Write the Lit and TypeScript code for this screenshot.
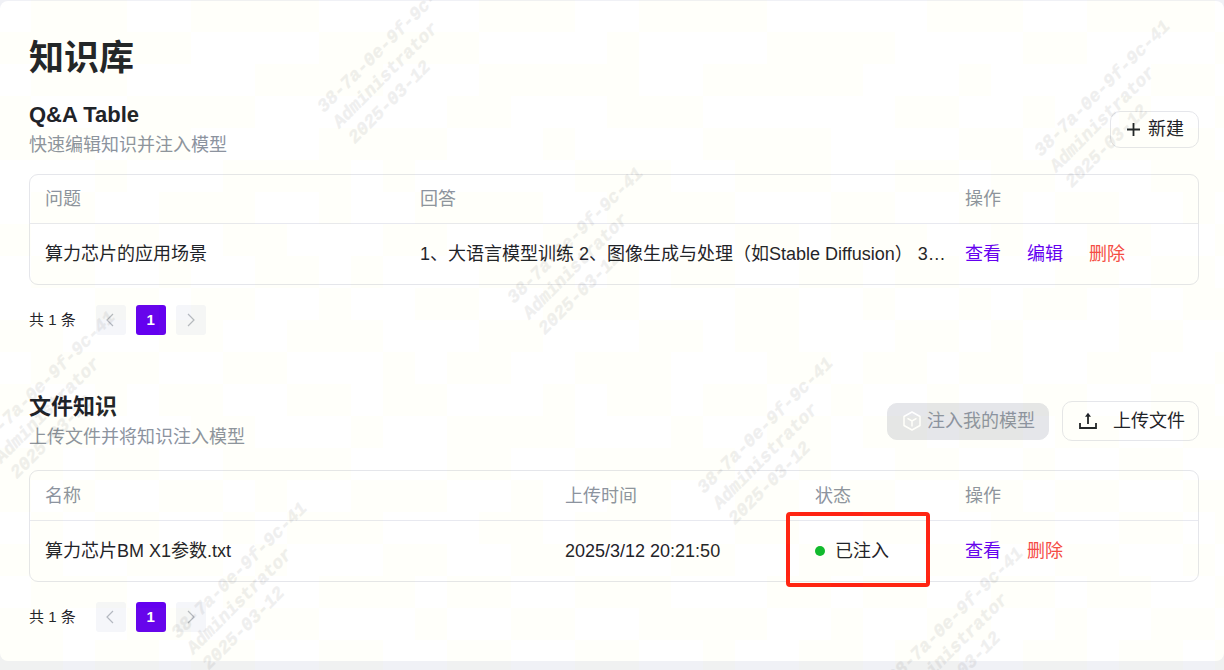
import { LitElement, html, css, svg } from "lit";
import { customElement, property } from "lit/decorators.js";

const CELL = 32;

/* Tint mosaic of the watermark layer: one string per row, "1" is a tinted cell. */
const MOSAIC = [
  "011100111100000111001111000001110011110",
  "111111000011111000010000111100001100001",
  "011100001111000111110011111000100000110",
  "100011110000001100011100000011001001001",
  "111011000011110001000011110000110111110",
  "000100011110100000111001110011011000111",
  "011001110010011110011110001100110110010",
  "100110011000110001100001101110010011001",
  "011001001101000111010110011011000110110",
  "000110110010011001110001100100101101011",
  "110001100111000110001101100011010001100",
  "011110011000101100111000110110110011001",
  "100101100110110001011011001001001100110",
  "011000110001001111000100110110110110011",
  "110110011110001100111110010011001001100",
  "101001101001110010011001101100110110011",
  "010110010111000110111001100110011001101",
  "110011101000110011000110011001100110010",
  "011100010011101100111000110110011011001",
  "110011001100010011001111001001100100110",
  "110110110011001100110010011011001101101",
];

const MARKS = [
  [324, 113],
  [1041, 157],
  [514, 304],
  [-14, 448],
  [704, 494],
  [178, 639],
  [894, 684],
];

@customElement("kb-watermark")
export class KbWatermark extends LitElement {
  static styles = css`
    :host {
      position: absolute;
      inset: 0;
      overflow: hidden;
      pointer-events: none;
    }
    .layer {
      display: block;
      width: 100%;
      height: 100%;
    }
    .tint {
      fill: #ffff00;
      fill-opacity: 0.02;
    }
    .mark {
      font: italic 700 18px "Liberation Mono", monospace;
      fill: #000;
      stroke: #000;
      stroke-width: 0.5px;
      opacity: 0.06;
    }
  `;

  render() {
    const tint = MOSAIC.map((row, y) =>
      [...row]
        .map((c, x) => (c === "1" ? `M${x * CELL - 1} ${y * CELL}h${CELL}v${CELL}h-${CELL}z` : ""))
        .join("")
    ).join("");
    return html`<svg class="layer" aria-hidden="true">
      <path class="tint" d=${tint}></path>
      ${MARKS.map(
        ([x, y]) => svg`<g class="mark" transform="translate(${x} ${y}) rotate(-45)">
          <text x="0" y="0">38-7a-0e-9f-9c-41</text>
          <text x="0" y="22">Administrator</text>
          <text x="0" y="44">2025-03-12</text>
        </g>`
      )}
    </svg>`;
  }
}

@customElement("kb-pager")
export class KbPager extends LitElement {
  @property({ type: Number }) total = 1;

  static styles = css`
    :host {
      display: flex;
      align-items: center;
      gap: 10px;
      margin-top: 20px;
      font-size: 15px;
    }
    .total {
      margin-right: 10px;
    }
    .btn {
      display: flex;
      align-items: center;
      justify-content: center;
      width: 30px;
      height: 30px;
      padding: 0;
      border: 0;
      border-radius: 3px;
      background: #f5f6fa;
      color: #b4b8c0;
      font: inherit;
    }
    .current {
      background: #6400f0;
      color: #fff;
      font-weight: 700;
    }
  `;

  render() {
    return html`
      <span class="total">共 ${this.total} 条</span>
      <button class="btn" disabled aria-label="上一页">
        <svg width="14" height="14" viewBox="0 0 14 14" fill="none" stroke="currentColor" stroke-width="1.2"><path d="M9 1 3 7l6 6" /></svg>
      </button>
      <button class="btn current" aria-current="page">1</button>
      <button class="btn" disabled aria-label="下一页">
        <svg width="14" height="14" viewBox="0 0 14 14" fill="none" stroke="currentColor" stroke-width="1.2"><path d="m4 1 6 6-6 6" /></svg>
      </button>
    `;
  }
}

@customElement("app-root")
export class AppRoot extends LitElement {
  static styles = css`
    :host {
      position: relative;
      display: flex;
      flex-direction: column;
      box-sizing: border-box;
      min-height: 100vh;
      padding: 1px 0 9px;
      background: #f0f1f6;
      color: #1f2329;
      font-family: "Liberation Sans", "Noto Sans CJK SC", sans-serif;
      font-size: 18px;
      line-height: 28px;
    }
    .card {
      flex: 1;
      box-sizing: border-box;
      padding: 33px 25px 29px 29px;
      border-radius: 8px;
      background: #fff;
    }
    .title {
      margin: 0 0 17px;
      font-size: 35px;
      line-height: 48px;
    }
    .files {
      margin-top: 56px;
    }
    .head {
      display: flex;
      align-items: center;
      justify-content: space-between;
      margin-bottom: 15px;
    }
    .files .head {
      margin-bottom: 19px;
    }
    .subtitle {
      margin: 0;
      font-size: 22px;
      line-height: 32px;
    }
    .hint {
      margin: 0;
      color: #8c939f;
    }
    .tools {
      display: flex;
      align-items: center;
      gap: 13px;
    }
    .button {
      display: flex;
      align-items: center;
      gap: 8px;
      height: 37px;
      box-sizing: border-box;
      padding: 0 14px 0 16px;
      border: 1px solid #e5e6eb;
      border-radius: 10px;
      background: #fff;
      color: #1f2329;
      font: inherit;
    }
    .inject {
      padding: 0 13px 0 15px;
      gap: 6px;
      border-color: #e5e6ea;
      background: #e5e6ea;
      color: #8c939f;
    }
    .inject svg {
      color: #fff;
    }
    .upload {
      gap: 16px;
      height: 40px;
      padding: 0 13px 0 16px;
    }
    .frame {
      border: 1px solid #e5e6eb;
      border-radius: 9px;
    }
    .table {
      width: 100%;
      table-layout: fixed;
      border-collapse: separate;
      border-spacing: 0;
    }
    th,
    td {
      box-sizing: border-box;
      padding: 0 0 0 15px;
      text-align: left;
      font-weight: 400;
      white-space: nowrap;
      overflow: hidden;
      text-overflow: ellipsis;
    }
    th {
      height: 49px;
      border-bottom: 1px solid #e8e9f0;
      color: #8c939f;
    }
    .files th {
      height: 50px;
    }
    td {
      height: 60px;
    }
    .c-question {
      width: 375px;
    }
    .c-time {
      width: 250px;
    }
    .c-status {
      width: 150px;
    }
    .c-ops {
      width: 248px;
    }
    .ops {
      display: flex;
      gap: 26px;
    }
    .link {
      color: #6400f0;
      text-decoration: none;
    }
    .danger {
      color: #f54a45;
    }
    .status-cell {
      position: relative;
      overflow: visible;
    }
    .status {
      display: flex;
      align-items: center;
      gap: 10px;
    }
    .dot {
      width: 10px;
      height: 10px;
      border-radius: 50%;
      background: #0db92e;
    }
    .callout {
      position: absolute;
      inset: -9px 20px -6px -14px;
      border: 4px solid #ff2213;
      border-radius: 4px;
      pointer-events: none;
    }
  `;

  render() {
    return html`
      <main class="card">
        <h1 class="title">知识库</h1>

        <section>
          <div class="head">
            <div>
              <h2 class="subtitle">Q&amp;A Table</h2>
              <p class="hint">快速编辑知识并注入模型</p>
            </div>
            <button class="button">
              <svg width="13" height="13" viewBox="0 0 13 13" fill="none" stroke="currentColor" stroke-width="1.8">
                <path d="M6.5 0v13M0 6.5h13" />
              </svg>
              新建
            </button>
          </div>
          <div class="frame">
            <table class="table">
              <thead>
                <tr>
                  <th class="c-question">问题</th>
                  <th>回答</th>
                  <th class="c-ops">操作</th>
                </tr>
              </thead>
              <tbody>
                <tr>
                  <td>算力芯片的应用场景</td>
                  <td>1、大语言模型训练 2、图像生成与处理（如Stable Diffusion） 3、科学计算</td>
                  <td>
                    <div class="ops">
                      <a class="link" href="#view">查看</a>
                      <a class="link" href="#edit">编辑</a>
                      <a class="link danger" href="#delete">删除</a>
                    </div>
                  </td>
                </tr>
              </tbody>
            </table>
          </div>
          <kb-pager .total=${1}></kb-pager>
        </section>

        <section class="files">
          <div class="head">
            <div>
              <h2 class="subtitle">文件知识</h2>
              <p class="hint">上传文件并将知识注入模型</p>
            </div>
            <div class="tools">
              <button class="button inject" disabled>
                <svg width="18" height="20" viewBox="0 0 18 20" fill="none" stroke="currentColor" stroke-width="1.5" stroke-linejoin="round">
                  <path d="M9 1l8 4.500v9L9 19l-8-4.500v-9zM4.500 7.300 9 10l4.500-2.700M9 10v5.500" />
                </svg>
                注入我的模型
              </button>
              <button class="button upload">
                <svg width="18" height="18" viewBox="0 0 18 18" fill="none" stroke="currentColor" stroke-width="1.8">
                  <path d="M1 11v5h16v-5" />
                  <path d="M9 12V2.500" />
                  <path d="M6 4.800 9 0.800l3 4z" fill="currentColor" stroke="none" />
                </svg>
                上传文件
              </button>
            </div>
          </div>
          <div class="frame">
            <table class="table">
              <thead>
                <tr>
                  <th>名称</th>
                  <th class="c-time">上传时间</th>
                  <th class="c-status">状态</th>
                  <th class="c-ops">操作</th>
                </tr>
              </thead>
              <tbody>
                <tr>
                  <td>算力芯片BM X1参数.txt</td>
                  <td>2025/3/12 20:21:50</td>
                  <td class="status-cell">
                    <div class="status"><span class="dot"></span>已注入</div>
                    <div class="callout"></div>
                  </td>
                  <td>
                    <div class="ops">
                      <a class="link" href="#view-file">查看</a>
                      <a class="link danger" href="#delete-file">删除</a>
                    </div>
                  </td>
                </tr>
              </tbody>
            </table>
          </div>
          <kb-pager .total=${1}></kb-pager>
        </section>
      </main>
      <kb-watermark></kb-watermark>
    `;
  }
}
